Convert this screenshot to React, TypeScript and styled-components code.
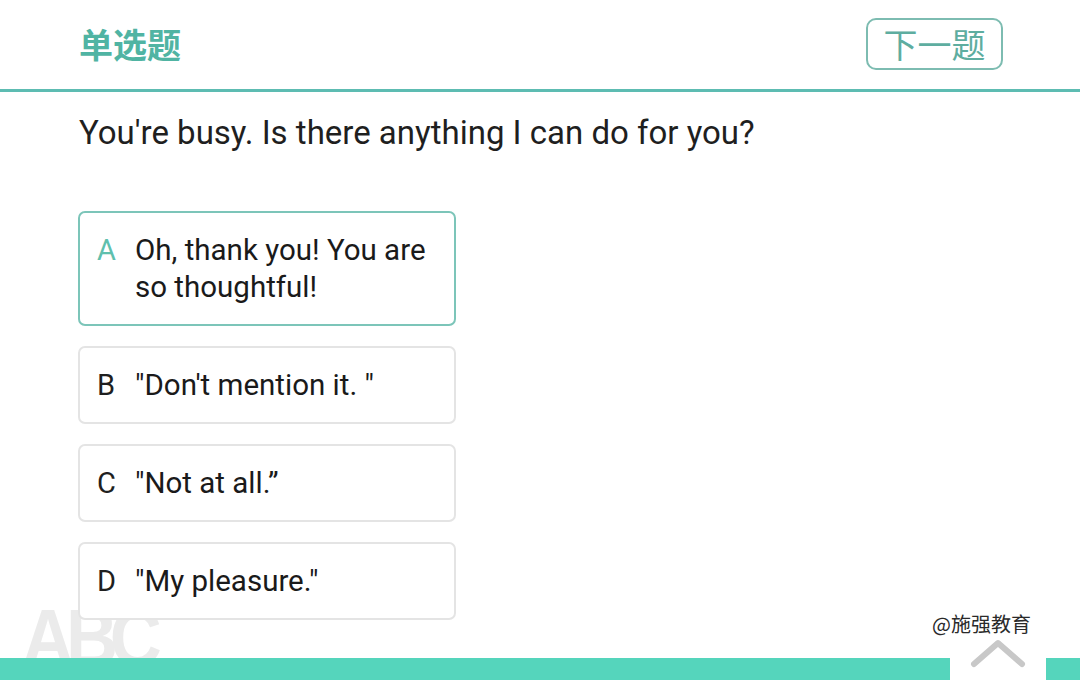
import React from 'react';
import styled, { createGlobalStyle } from 'styled-components';

interface Option {
    key: string;
    text: string;
}

const OPTIONS: Option[] = [
    { key: 'A', text: 'Oh, thank you! You are so thoughtful!' },
    { key: 'B', text: '"Don\'t mention it. "' },
    { key: 'C', text: '"Not at all.”' },
    { key: 'D', text: '"My pleasure."' },
];

const SELECTED = 'A';

const App = (): JSX.Element => {
    return (
        <>
            <GlobalStyle />
            <Page>
                <Watermark>ABC</Watermark>

                <Header>
                    <Title>单选题</Title>
                    <NextButton>下一题</NextButton>
                </Header>
                <Divider />

                <Main>
                    <Question>You&apos;re busy. Is there anything I can do for you?</Question>

                    <OptionList>
                        {OPTIONS.map((option) => (
                            <OptionCard key={option.key} $selected={option.key === SELECTED}>
                                <OptionKey $selected={option.key === SELECTED}>{option.key}</OptionKey>
                                <OptionText>{option.text}</OptionText>
                            </OptionCard>
                        ))}
                    </OptionList>
                </Main>

                <Credit>@施强教育</Credit>

                <Footer>
                    <FooterBar />
                    <FooterGap>
                        <Chevron viewBox="0 0 56 30">
                            <polyline points="4,25 28,4 52,25" />
                        </Chevron>
                    </FooterGap>
                    <FooterEnd />
                </Footer>
            </Page>
        </>
    );
};

const GlobalStyle = createGlobalStyle`
    html, body {
        margin: 0;
        padding: 0;
        background: #ffffff;
    }

    * {
        box-sizing: border-box;
    }
`;

const Page = styled.div`
    position: relative;
    display: flex;
    flex-direction: column;

    width: 1080px;
    height: 680px;
    overflow: hidden;

    background: #ffffff;
    font-family: Roboto, "Noto Sans CJK SC", sans-serif;
`;

const Header = styled.div`
    display: flex;
    align-items: center;
    justify-content: space-between;

    height: 89px;
    padding: 0 77px 0 79px;
`;

const Title = styled.div`
    font-family: "Noto Sans CJK SC", sans-serif;
    font-size: 34px;
    font-weight: 700;
    line-height: 40px;
    color: #50b4a3;
    margin-top: -2px;
`;

const NextButton = styled.button`
    display: flex;
    align-items: center;
    justify-content: center;

    width: 137px;
    height: 52px;
    padding: 0;
    margin-top: -2px;

    border: 2px solid #7dbcb1;
    border-radius: 10px;
    background: transparent;

    font-family: "Noto Sans CJK SC", sans-serif;
    font-size: 34px;
    font-weight: 400;
    color: #5eada0;
`;

const Divider = styled.div`
    height: 3px;
    background: #5dbcb2;
`;

const Main = styled.div`
    position: relative;
    z-index: 1;
    flex: 1;
    display: flex;
    flex-direction: column;

    padding: 21px 0 0 78px;
`;

const Question = styled.div`
    padding-left: 1px;

    font-size: 33px;
    line-height: 40px;
    color: #1f1f1f;
`;

const OptionList = styled.div`
    display: flex;
    flex-direction: column;
    gap: 20px;

    margin-top: 58px;
    width: 378px;
`;

const OptionCard = styled.div<{ $selected: boolean }>`
    display: flex;
    align-items: flex-start;

    padding: 19px 12px 18px 17px;

    border: ${(p) => (p.$selected ? '2px solid #7cc5b9' : '2px solid #e4e4e4')};
    border-radius: 7px;
    background: #ffffff;
`;

const OptionKey = styled.span<{ $selected: boolean }>`
    flex: 0 0 38px;

    font-size: 29px;
    line-height: 37px;
    color: ${(p) => (p.$selected ? '#5fc0ad' : '#1f1f1f')};
`;

const OptionText = styled.span`
    font-size: 29.5px;
    line-height: 37px;
    color: #1a1a1a;
`;

const Watermark = styled.div`
    position: absolute;
    z-index: 0;
    left: 22px;
    top: 598px;

    font-family: "Liberation Sans", Arial, sans-serif;
    font-size: 80px;
    font-weight: 700;
    line-height: 80px;
    letter-spacing: -9px;
    color: #ebebeb;

    transform: scaleX(0.9);
    transform-origin: left top;
    pointer-events: none;
`;

const Credit = styled.div`
    position: absolute;
    z-index: 2;
    left: 932px;
    top: 610px;

    font-family: "Noto Sans CJK SC", sans-serif;
    font-size: 20px;
    line-height: 28px;
    color: #2a2a2a;
`;

const Footer = styled.div`
    position: relative;
    z-index: 2;
    display: flex;
    height: 22px;
`;

const FooterBar = styled.div`
    width: 950px;
    background: #55d5bc;
`;

const FooterGap = styled.div`
    position: relative;
    width: 96px;
    background: #ffffff;
`;

const FooterEnd = styled.div`
    flex: 1;
    background: #55d5bc;
`;

const Chevron = styled.svg`
    position: absolute;
    left: 20px;
    top: -19px;
    width: 56px;
    height: 30px;

    fill: none;
    stroke: #c8c8c8;
    stroke-width: 6;
    stroke-linecap: round;
    stroke-linejoin: round;
`;

export default App;
